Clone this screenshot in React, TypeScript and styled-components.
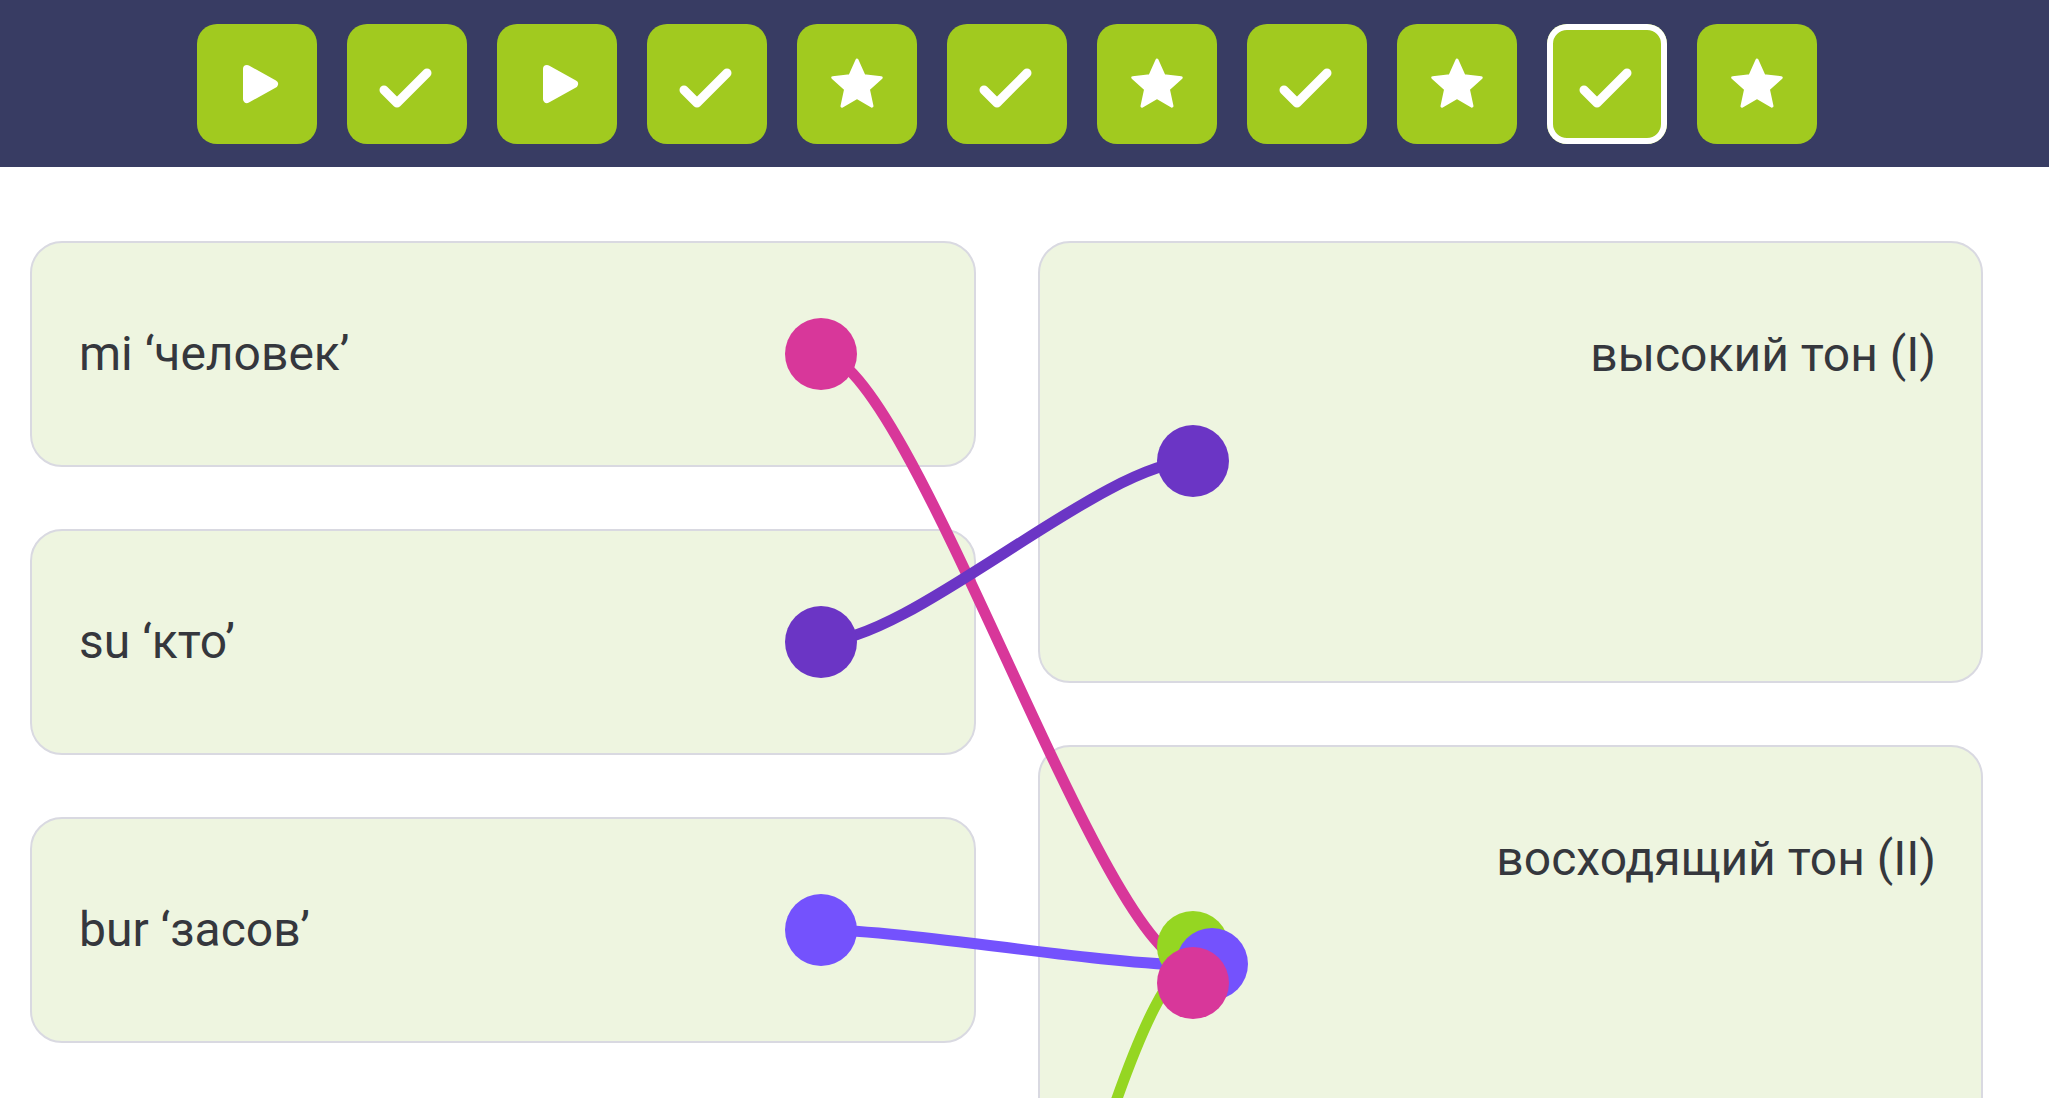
import React, { useLayoutEffect, useRef, useState } from "react";
import styled, { createGlobalStyle } from "styled-components";

const GlobalStyle = createGlobalStyle`
  html, body {
    margin: 0;
    padding: 0;
    background: #ffffff;
    overflow: hidden;
  }
  body {
    font-family: Roboto, "Noto Sans", "Liberation Sans", sans-serif;
  }
`;

const Page = styled.div`
  width: 2049px;
  height: 1098px;
  overflow: hidden;
  background: #ffffff;
`;

const Header = styled.header`
  box-sizing: border-box;
  height: 167px;
  background: #383c63;
  display: flex;
  align-items: center;
  justify-content: center;
  gap: 30px;
  padding-right: 35px;
`;

const StepButton = styled.button<{ $active?: boolean }>`
  position: relative;
  width: 120px;
  height: 120px;
  padding: 0;
  border: none;
  border-radius: 20px;
  background: #a1ca1f;
  box-shadow: ${(p) => (p.$active ? "inset 0 0 0 6px #ffffff" : "none")};
  cursor: pointer;
  display: flex;
  align-items: center;
  justify-content: center;

  svg {
    display: block;
  }
`;

const Board = styled.main`
  position: relative;
  box-sizing: border-box;
  display: grid;
  grid-template-columns: 1fr 1fr;
  column-gap: 62px;
  padding: 74px 66px 0 30px;
`;

const LeftColumn = styled.div`
  display: flex;
  flex-direction: column;
  gap: 62px;
`;

const RightColumn = styled.div`
  display: flex;
  flex-direction: column;
  gap: 62px;
`;

const ItemCard = styled.div`
  box-sizing: border-box;
  height: 226px;
  border: 2px solid #d9d9e1;
  border-radius: 32px;
  background: #eef5e0;
  display: flex;
  align-items: center;
  justify-content: space-between;
  padding: 0 117px 0 47px;
`;

const TargetCard = styled.div<{ $height: number }>`
  box-sizing: border-box;
  height: ${(p) => p.$height}px;
  border: 2px solid #d9d9e1;
  border-radius: 32px;
  background: #eef5e0;
  display: flex;
  flex-direction: column;
  align-items: stretch;
  padding: 84px 45px 0 117px;
`;

const Label = styled.span<{ $align?: "left" | "right" }>`
  display: block;
  font-family: Roboto, "Noto Sans", "Liberation Sans", sans-serif;
  font-size: 48px;
  line-height: 56px;
  color: #35373d;
  text-align: ${(p) => p.$align ?? "left"};
  white-space: nowrap;
`;

const DotSlot = styled.div`
  position: relative;
  width: 72px;
  height: 72px;
  margin-top: 42px;
`;

const Dot = styled.span<{ $color: string }>`
  position: relative;
  z-index: 2;
  display: block;
  flex: none;
  width: 72px;
  height: 72px;
  border-radius: 50%;
  background: ${(p) => p.$color};
`;

const StackedDot = styled(Dot)<{ $dx: number; $dy: number }>`
  position: absolute;
  left: ${(p) => p.$dx}px;
  top: ${(p) => p.$dy}px;
`;

const Lines = styled.svg`
  position: absolute;
  left: 0;
  top: 0;
  width: 100%;
  height: 100%;
  overflow: visible;
  pointer-events: none;
  z-index: 1;
`;

const PINK = "#d8379a";
const PURPLE = "#6b35c5";
const VIOLET = "#7452fd";
const LIME = "#95d622";

type Kind = "play" | "check" | "star";

const PlayIcon = () => (
  <svg width="120" height="120" viewBox="0 0 120 120">
    <polygon
      points="50,45 77,60 50,75"
      fill="#fff"
      stroke="#fff"
      strokeWidth="8"
      strokeLinejoin="round"
    />
  </svg>
);

const CheckIcon = () => (
  <svg width="120" height="120" viewBox="0 0 120 120">
    <polyline
      points="37,66 50,79 80,49"
      fill="none"
      stroke="#fff"
      strokeWidth="9"
      strokeLinecap="round"
      strokeLinejoin="round"
    />
  </svg>
);

const starPoints = (() => {
  const cx = 60;
  const cy = 61.5;
  const R = 25.5;
  const r = 12;
  const pts: string[] = [];
  for (let i = 0; i < 10; i++) {
    const a = ((-90 + i * 36) * Math.PI) / 180;
    const rad = i % 2 === 0 ? R : r;
    pts.push(`${(cx + rad * Math.cos(a)).toFixed(2)},${(cy + rad * Math.sin(a)).toFixed(2)}`);
  }
  return pts.join(" ");
})();

const StarIcon = () => (
  <svg width="120" height="120" viewBox="0 0 120 120">
    <polygon
      points={starPoints}
      fill="#fff"
      stroke="#fff"
      strokeWidth="3"
      strokeLinejoin="round"
    />
  </svg>
);

const steps: Kind[] = [
  "play",
  "check",
  "play",
  "check",
  "star",
  "check",
  "star",
  "check",
  "star",
  "check",
  "star",
];

const iconFor = (k: Kind) =>
  k === "play" ? <PlayIcon /> : k === "check" ? <CheckIcon /> : <StarIcon />;

type Pt = { x: number; y: number };
type Link = { color: string; from: Pt; to: Pt };

const curve = (a: Pt, b: Pt) => {
  const d = 90;
  return `M ${a.x} ${a.y} C ${a.x + d} ${a.y}, ${b.x - d} ${b.y}, ${b.x} ${b.y}`;
};

export default function App() {
  const boardRef = useRef<HTMLElement>(null);
  const left0 = useRef<HTMLSpanElement>(null);
  const left1 = useRef<HTMLSpanElement>(null);
  const left2 = useRef<HTMLSpanElement>(null);
  const right0 = useRef<HTMLSpanElement>(null);
  const stack = useRef<HTMLDivElement>(null);
  const [links, setLinks] = useState<Link[]>([]);

  useLayoutEffect(() => {
    const measure = () => {
      const board = boardRef.current;
      if (!board) return;
      const b = board.getBoundingClientRect();
      const c = (el: Element | null): Pt => {
        if (!el) return { x: 0, y: 0 };
        const r = el.getBoundingClientRect();
        return { x: r.left + r.width / 2 - b.left, y: r.top + r.height / 2 - b.top };
      };
      const anchor = c(stack.current);
      setLinks([
        { color: LIME, from: { x: anchor.x - 372, y: anchor.y + 1000 }, to: anchor },
        { color: PINK, from: c(left0.current), to: anchor },
        { color: PURPLE, from: c(left1.current), to: c(right0.current) },
        { color: VIOLET, from: c(left2.current), to: anchor },
      ]);
    };
    measure();
    window.addEventListener("resize", measure);
    return () => window.removeEventListener("resize", measure);
  }, []);

  return (
    <Page>
      <GlobalStyle />
      <Header>
        {steps.map((k, i) => (
          <StepButton key={i} $active={i === 9} aria-label={`step ${i + 1}`}>
            {iconFor(k)}
          </StepButton>
        ))}
      </Header>
      <Board ref={boardRef}>
        <LeftColumn>
          <ItemCard>
            <Label>mi ‘человек’</Label>
            <Dot ref={left0} $color={PINK} />
          </ItemCard>
          <ItemCard>
            <Label>su ‘кто’</Label>
            <Dot ref={left1} $color={PURPLE} />
          </ItemCard>
          <ItemCard>
            <Label>bur ‘засов’</Label>
            <Dot ref={left2} $color={VIOLET} />
          </ItemCard>
        </LeftColumn>
        <RightColumn>
          <TargetCard $height={442}>
            <Label $align="right">высокий тон (I)</Label>
            <DotSlot>
              <Dot ref={right0} $color={PURPLE} />
            </DotSlot>
          </TargetCard>
          <TargetCard $height={700}>
            <Label $align="right">восходящий тон (II)</Label>
            <DotSlot ref={stack}>
              <StackedDot $color={LIME} $dx={0} $dy={-18} />
              <StackedDot $color={VIOLET} $dx={19} $dy={-1} />
              <StackedDot $color={PINK} $dx={0} $dy={18} />
            </DotSlot>
          </TargetCard>
        </RightColumn>
        <Lines>
          {links.map((l, i) => (
            <path
              key={i}
              d={curve(l.from, l.to)}
              fill="none"
              stroke={l.color}
              strokeWidth={11}
              strokeLinecap="round"
            />
          ))}
        </Lines>
      </Board>
    </Page>
  );
}
